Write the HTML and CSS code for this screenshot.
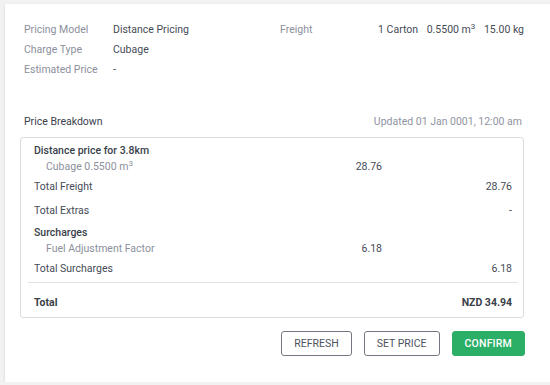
FILE: index.html
```html
<!DOCTYPE html>
<html>
<head>
<meta charset="utf-8">
<link rel="stylesheet" href="styles.css">
</head>
<body>
<div class="card">
  <div class="info">
    <div class="info-left">
      <div class="info-row"><span class="lbl">Pricing Model</span><span class="val">Distance Pricing</span></div>
      <div class="info-row"><span class="lbl">Charge Type</span><span class="val">Cubage</span></div>
      <div class="info-row"><span class="lbl">Estimated Price</span><span class="val">-</span></div>
    </div>
    <div class="info-right">
      <div class="info-row"><span class="lbl">Freight</span><span class="val freight">1 Carton <span class="gap">0.5500 m<sup>3</sup></span> <span class="gap">15.00 kg</span></span></div>
    </div>
  </div>

  <div class="bd-head">
    <span class="bd-title">Price Breakdown</span>
    <span class="bd-updated">Updated 01 Jan 0001, 12:00 am</span>
  </div>

  <div class="bd-box">
    <div class="sec-head">Distance price for 3.8km</div>
    <div class="sub-row"><span class="sub-lbl">Cubage 0.5500 m<sup>3</sup></span><span class="sub-val">28.76</span></div>
    <div class="tot-row"><span>Total Freight</span><span>28.76</span></div>
    <div class="tot-row"><span>Total Extras</span><span>-</span></div>
    <div class="sec-head sec-gap">Surcharges</div>
    <div class="sub-row"><span class="sub-lbl">Fuel Adjustment Factor</span><span class="sub-val">6.18</span></div>
    <div class="tot-row"><span>Total Surcharges</span><span>6.18</span></div>
    <div class="divider"></div>
    <div class="grand-row"><span>Total</span><span>NZD 34.94</span></div>
  </div>

  <div class="actions">
    <button class="btn">REFRESH</button>
    <button class="btn">SET PRICE</button>
    <button class="btn btn-primary">CONFIRM</button>
  </div>
</div>
</body>
</html>
```

FILE: styles.css
```css
html, body {
  margin: 0;
  padding: 0;
  background: #f2f2f3;
  font-family: Roboto, "Liberation Sans", sans-serif;
  font-size: 10.5px;
  color: #464b57;
}
.card {
  margin: 4px 0 0 5px;
  height: 378px;
  box-sizing: border-box;
  background: #fff;
  box-shadow: 0 1px 3px rgba(0,0,0,0.12);
  padding: 16px 25px 0 19px;
}
.info {
  display: flex;
  height: 92px;
}
.info-left {
  width: 256px;
}
.info-right {
  flex: 1;
}
.info-row {
  display: flex;
  height: 20px;
  line-height: 20px;
}
.lbl {
  color: #8c909c;
  width: 89px;
  flex: none;
}
.val {
  color: #464b57;
}
.freight {
  flex: 1;
  text-align: right;
  padding-right: 1px;
}
.gap {
  margin-left: 6px;
}
sup {
  font-size: 8px;
  line-height: 0;
  vertical-align: 4px;
}
.bd-head {
  display: flex;
  justify-content: space-between;
  height: 20px;
  line-height: 20px;
  padding-right: 3px;
}
.bd-title {
  color: #3c414c;
}
.bd-updated {
  color: #90949f;
}
.bd-box {
  margin: 5px 1px 0 -4px;
  border: 1px solid #dcdcdf;
  border-radius: 3px;
  padding: 5px 5px 2px 7px;
}
.sec-head, .sub-row, .tot-row, .grand-row {
  padding: 0 6px 0 6px;
}
.sec-head {
  font-weight: 500;
  color: #3a3f4a;
  line-height: 16px;
  height: 16px;
}
.sec-gap {
  margin-top: 2px;
}
.sub-row {
  display: flex;
  line-height: 16px;
  height: 16px;
  color: #8c909c;
}
.sub-lbl {
  flex: 1;
  padding-left: 12px;
}
.sub-val {
  color: #464b57;
  margin-right: 130px;
}
.tot-row {
  display: flex;
  justify-content: space-between;
  height: 24px;
  line-height: 24px;
  color: #464b57;
}
.divider {
  height: 1px;
  background: #e3e3e6;
  margin: 1px 0 0 0;
}
.grand-row {
  display: flex;
  justify-content: space-between;
  font-weight: 700;
  color: #3a3f4a;
  height: 24px;
  line-height: 24px;
  padding-top: 8px;
}
.actions {
  display: flex;
  justify-content: flex-end;
  gap: 12px;
  margin-top: 13px;
}
.btn {
  font-family: Roboto, "Liberation Sans", sans-serif;
  font-size: 10.5px;
  color: #4d525d;
  background: #fff;
  border: 1px solid #72767f;
  border-radius: 3px;
  height: 25px;
  padding: 0 12px;
}
.btn-primary {
  background: #2bae66;
  border-color: #2bae66;
  color: #fff;
  font-weight: 500;
  padding: 0 12px;
  letter-spacing: 0.2px;
}
```
